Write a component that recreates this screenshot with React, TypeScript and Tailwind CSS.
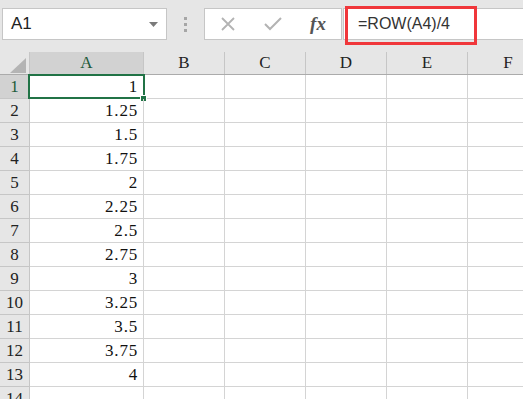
import React from 'react';

const cols = ['B', 'C', 'D', 'E', 'F'];
const values = ['1', '1.25', '1.5', '1.75', '2', '2.25', '2.5', '2.75', '3', '3.25', '3.5', '3.75', '4', ''];

const serif = { fontFamily: '"Liberation Serif", "DejaVu Serif", serif' };

const App: React.FC = () => {
  return (
    <div className="w-[523px] h-[399px] overflow-hidden bg-white relative select-none">
      {/* Toolbar */}
      <div className="h-[52px] bg-[#e6e6e6] flex items-start pt-[8px] font-['Liberation_Sans',sans-serif]">
        {/* Name box */}
        <div className="ml-[2px] w-[165px] h-[32px] bg-white border border-[#c6c6c6] flex items-center justify-between pl-[8px] pr-[8px]">
          <span className="text-[17px] text-[#222]">A1</span>
          <svg width="9" height="5" viewBox="0 0 9 5">
            <path d="M0 0 L9 0 L4.5 5 Z" fill="#7a7a7a" />
          </svg>
        </div>

        {/* Separator dots */}
        <div className="w-[37px] h-[32px] flex flex-col items-center justify-center gap-[3px]">
          <span className="w-[3px] h-[3px] bg-[#a6a6a6]" />
          <span className="w-[3px] h-[3px] bg-[#a6a6a6]" />
          <span className="w-[3px] h-[3px] bg-[#a6a6a6]" />
        </div>

        {/* Buttons */}
        <div className="w-[138px] h-[32px] bg-white border border-[#c6c6c6] flex items-center">
          <div className="w-[46px] flex justify-center">
            <svg width="16" height="16" viewBox="0 0 16 16">
              <path d="M2 2 L14 14 M14 2 L2 14" stroke="#b3b3b3" strokeWidth="1.8" />
            </svg>
          </div>
          <div className="w-[44px] flex justify-center">
            <svg width="18" height="14" viewBox="0 0 18 14">
              <path d="M1 7 L6 12 L17 1" stroke="#b3b3b3" strokeWidth="2" fill="none" />
            </svg>
          </div>
          <div className="flex-1 flex justify-center">
            <span className="text-[19px] italic font-semibold text-[#555] font-['Liberation_Serif',serif]">fx</span>
          </div>
        </div>

        {/* Formula input */}
        <div className="ml-[1px] flex-1 h-[32px] bg-white border-y border-l border-[#c6c6c6] flex items-center pl-[14px]">
          <span className="text-[16px] text-[#333]">=ROW(A4)/4</span>
        </div>

        {/* Highlight */}
        <div className="absolute left-[345px] top-[6px] w-[132px] h-[39px] border-[3px] border-[#f0373b]" />
      </div>

      {/* Column headers */}
      <div className="flex h-[23px] bg-[#e6e6e6] border-b border-[#ababab]" style={serif}>
        <div className="w-[30px] shrink-0 border-r border-[#c6c6c6] relative">
          <svg className="absolute left-[10px] top-[6px]" width="16" height="15" viewBox="0 0 16 15">
            <path d="M16 0 L16 15 L0 15 Z" fill="#b4b4b4" />
          </svg>
        </div>
        <div className="w-[114px] shrink-0 bg-[#d2d2d2] border-r border-[#c6c6c6] flex items-center justify-center text-[17px] text-[#1e5a3a]">
          A
        </div>
        {cols.map(c => (
          <div
            key={c}
            className="w-[81px] shrink-0 border-r border-[#c6c6c6] flex items-center justify-center text-[17px] text-[#222]"
          >
            {c}
          </div>
        ))}
      </div>

      {/* Rows */}
      <div style={serif}>
        {values.map((v, i) => (
          <div key={i} className="flex h-[24px]">
            <div
              className={`w-[30px] shrink-0 border-r border-b border-[#c6c6c6] flex items-center justify-center text-[17px] ${
                i === 0 ? 'bg-[#d2d2d2] text-[#1e5a3a]' : 'bg-[#e6e6e6] text-[#222]'
              }`}
            >
              {i + 1}
            </div>
            <div className="w-[114px] shrink-0 border-r border-b border-[#d4d4d4] flex items-center justify-end pr-[5px] text-[17px] tracking-[0.8px] text-[#111] relative">
              {v}
              {i === 0 && (
                <>
                  <div className="absolute -left-[2px] -top-[1px] -right-[2px] -bottom-[1px] border-2 border-[#217346]" />
                  <div className="absolute -right-[4px] -bottom-[4px] w-[7px] h-[7px] bg-[#217346] border border-white" />
                </>
              )}
            </div>
            {cols.map(c => (
              <div key={c} className="w-[81px] shrink-0 border-r border-b border-[#d4d4d4]" />
            ))}
          </div>
        ))}
      </div>
    </div>
  );
};

export default App;
